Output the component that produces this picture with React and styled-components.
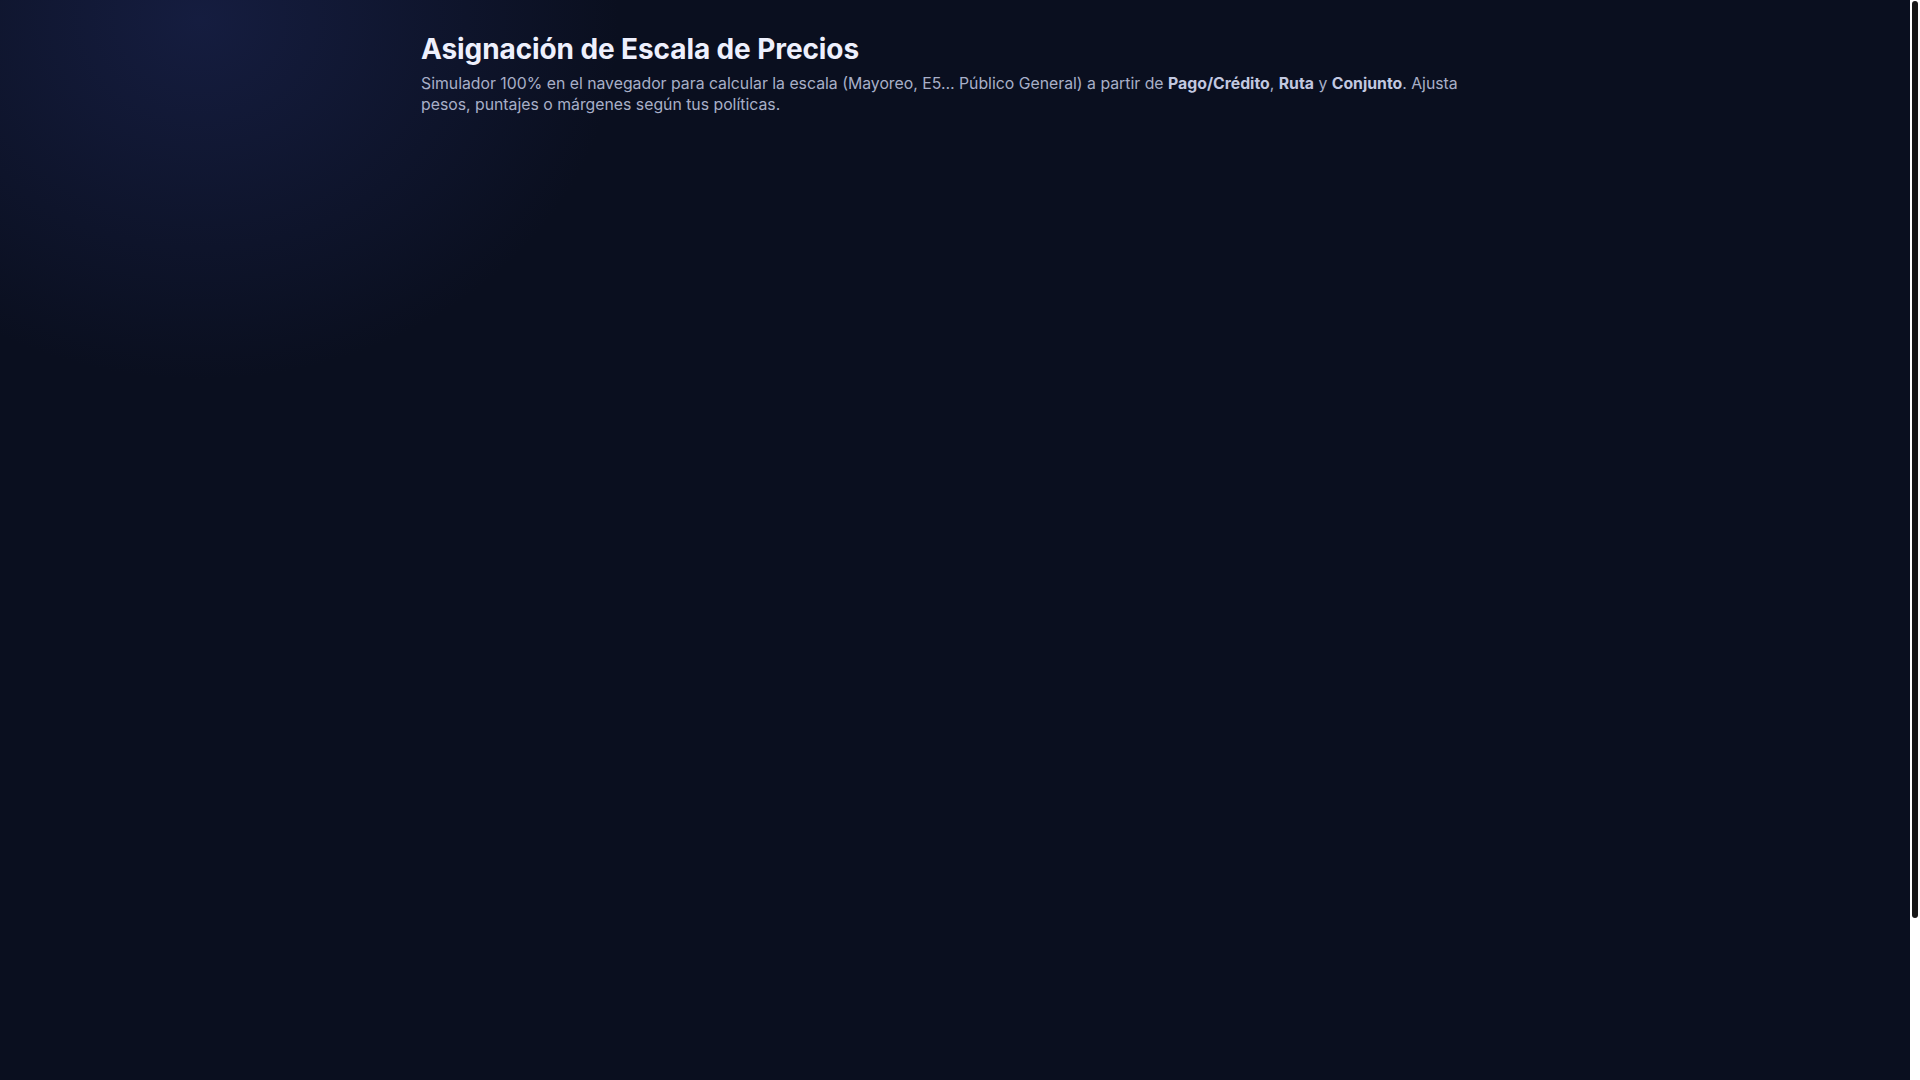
import React from "react";
import styled, { createGlobalStyle } from "styled-components";

const Global = createGlobalStyle`
  html, body { margin: 0; padding: 0; height: 100%; overflow: hidden; }
  body {
    background: #0a0f1f;
    font-family: Inter, "Noto Sans", sans-serif;
    color: #e8ebfa;
  }
  #root { height: 100%; }
`;

const Viewport = styled.div`
  height: 100vh;
  display: flex;
  background: #ffffff;
`;

const Page = styled.div`
  flex: 1;
  min-width: 0;
  height: 100%;
  background:
    radial-gradient(ellipse 420px 360px at 200px 20px, rgba(30, 40, 90, 0.55), rgba(30, 40, 90, 0) 100%),
    #0a0f1f;
`;

const ScrollTrack = styled.div`
  width: 10px;
  flex: none;
  background: #ffffff;
  padding: 1px 2px 0;
  box-sizing: border-box;
`;

const ScrollThumb = styled.div`
  height: 917px;
  border-radius: 3px;
  background: #161616;
`;

const Container = styled.main`
  max-width: 1108px;
  margin: 0 auto;
  padding: 33px 28px 0 20px;
  box-sizing: border-box;
`;

const Title = styled.h1`
  margin: 0;
  font-size: 28px;
  line-height: 33.6px;
  font-weight: 700;
  letter-spacing: -0.1px;
  color: #eef0fd;
`;

const Subtitle = styled.p`
  margin: 6px 0 0;
  font-size: 15.8px;
  line-height: 21px;
  color: #a8afc8;
`;

const Strong = styled.b`
  font-weight: 700;
  color: #c2c8e0;
`;

export default function App() {
  return (
    <>
      <Global />
      <Viewport>
        <Page>
          <Container>
            <Title>Asignación de Escala de Precios</Title>
            <Subtitle>
              Simulador 100% en el navegador para calcular la escala (Mayoreo, E5… Público General) a partir de{" "}
              <Strong>Pago/Crédito</Strong>, <Strong>Ruta</Strong> y <Strong>Conjunto</Strong>. Ajusta pesos, puntajes o
              márgenes según tus políticas.
            </Subtitle>
          </Container>
        </Page>
        <ScrollTrack aria-hidden="true">
          <ScrollThumb />
        </ScrollTrack>
      </Viewport>
    </>
  );
}
